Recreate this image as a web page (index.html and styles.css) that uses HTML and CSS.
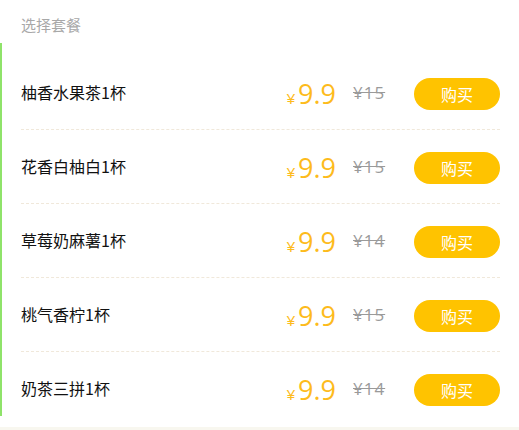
FILE: index.html
```html
<!DOCTYPE html>
<html lang="zh">
<head>
<meta charset="utf-8">
<link rel="stylesheet" href="styles.css">
</head>
<body>
<div class="panel">
  <div class="title">选择套餐</div>
  <div class="list">
    <div class="row">
      <div class="name">柚香水果茶1杯</div>
      <div class="price"><span class="yen">¥</span><span class="num">9.9</span></div>
      <div class="old">¥15</div>
      <button class="buy">购买</button>
    </div>
    <div class="row">
      <div class="name">花香白柚白1杯</div>
      <div class="price"><span class="yen">¥</span><span class="num">9.9</span></div>
      <div class="old">¥15</div>
      <button class="buy">购买</button>
    </div>
    <div class="row">
      <div class="name">草莓奶麻薯1杯</div>
      <div class="price"><span class="yen">¥</span><span class="num">9.9</span></div>
      <div class="old">¥14</div>
      <button class="buy">购买</button>
    </div>
    <div class="row">
      <div class="name">桃气香柠1杯</div>
      <div class="price"><span class="yen">¥</span><span class="num">9.9</span></div>
      <div class="old">¥15</div>
      <button class="buy">购买</button>
    </div>
    <div class="row last">
      <div class="name">奶茶三拼1杯</div>
      <div class="price"><span class="yen">¥</span><span class="num">9.9</span></div>
      <div class="old">¥14</div>
      <button class="buy">购买</button>
    </div>
  </div>
</div>
</body>
</html>
```

FILE: styles.css
```css
html, body {
  margin: 0;
  padding: 0;
}
body {
  background: #f8f7ef;
  font-family: "Noto Sans CJK SC", "Noto Sans", sans-serif;
  height: 430px;
  overflow: hidden;
}
.panel {
  background: #fff;
  height: 427px;
}
.title {
  height: 43px;
  box-sizing: border-box;
  padding: 15px 0 0 21px;
  font-size: 15px;
  line-height: 20px;
  color: #a8a8a8;
}
.list {
  position: relative;
  padding: 13px 19px 0 21px;
}
.list::before {
  content: "";
  position: absolute;
  left: 0;
  top: 0;
  width: 2px;
  height: 373px;
  background: #8fe36a;
}
.row {
  display: flex;
  align-items: center;
  height: 73px;
  border-bottom: 1px dashed #f0e8da;
}
.row.last {
  border-bottom: none;
}
.name {
  flex: 1;
  font-size: 16px;
  color: #111;
  line-height: 20px;
  margin-top: -2px;
}
.price {
  color: #fdbb1c;
  display: flex;
  align-items: baseline;
  margin-top: 2px;
}
.yen {
  font-family: "Liberation Sans", sans-serif;
  font-size: 15px;
  margin-right: 3px;
}
.num {
  font-family: "Open Sans", "Liberation Sans", sans-serif;
  font-size: 27px;
  line-height: 30px;
}
.old {
  margin-left: 17px;
  font-family: "Open Sans", "Liberation Sans", sans-serif;
  font-size: 17px;
  letter-spacing: 1px;
  color: #9a9a9a;
  text-decoration: line-through;
  width: 37px;
  white-space: nowrap;
}
.buy {
  margin-left: 24px;
  width: 86px;
  height: 32px;
  border: none;
  border-radius: 16px;
  background: #ffc300;
  color: #fff;
  font-family: "Noto Sans CJK SC", sans-serif;
  font-size: 16px;
  padding: 0;
  margin-top: 2px;
}
```
